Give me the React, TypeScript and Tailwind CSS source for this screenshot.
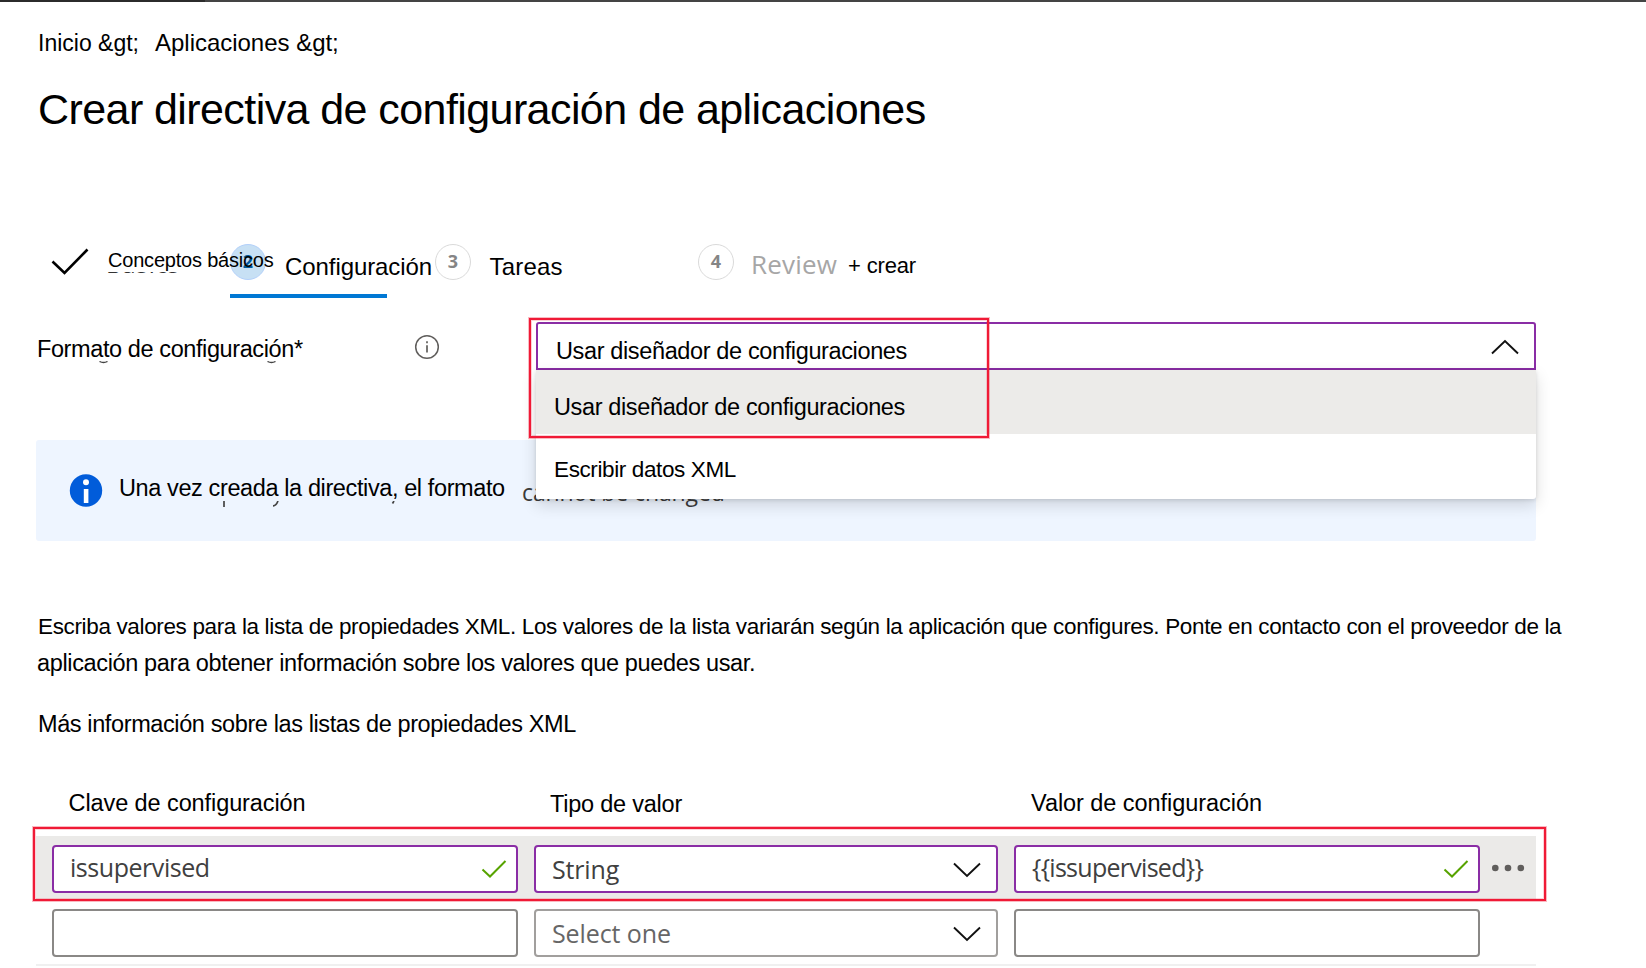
import React from "react";

const arial = "font-['Liberation_Sans',Arial,sans-serif] whitespace-nowrap text-black leading-[24px] block";
const segoe = "font-['Open_Sans','Noto_Sans',sans-serif] whitespace-nowrap block";

function ChevronDown() {
  return (
    <svg width="28" height="16" viewBox="0 0 28 16" fill="none" stroke="#111" strokeWidth="1.9">
      <path d="M1 1.5 14 14 27 1.5" />
    </svg>
  );
}

function GreenCheck() {
  return (
    <svg width="26" height="20" viewBox="0 0 26 20" fill="none" stroke="#57a300" strokeWidth="2">
      <path d="M1.5 10.5 9 17.5 24.5 2" />
    </svg>
  );
}

/* Thin highlight frame with a pale halo on both sides. */
function Highlight({ className }: { className: string }) {
  return (
    <div
      className={`pointer-events-none absolute border-2 border-[#f01a36] shadow-[0_0_0_1px_rgba(240,26,54,0.3),inset_0_0_0_1px_rgba(240,26,54,0.2)] ${className}`}
    />
  );
}

function Steps() {
  return (
    <div className="relative mt-[109px] flex h-[54px] items-start">
      <svg className="mt-1 ml-[50px]" width="40" height="28" viewBox="0 0 40 28" fill="none" stroke="#000" strokeWidth="2.6">
        <path d="M2.5 13.5 14.5 25 37.5 1.5" />
      </svg>
      <div className="mt-[28px] ml-[16px] h-[2px] w-[124px] overflow-hidden">
        <span className={`${segoe} -mt-[20px] text-[24px] leading-[24px] tracking-[0.8px] text-[#333]`}>Basics</span>
      </div>
      <div className="flex h-[54px] w-[157px] flex-col border-b-4 border-[#0078d4]">
        <div className={`${segoe} size-[36px] rounded-full border-[1.5px] border-[#b3d0fa] bg-[#c7e0f4] text-center text-[18px] leading-[33px] font-bold text-[#005a9e]`}>2</div>
      </div>
      <span className={`${arial} absolute top-[4px] left-[108px] text-[20px] tracking-[-0.2px]`}>Conceptos básicos</span>
      <span className={`${arial} mt-[11px] -ml-[102px] w-[148px] text-[24px] tracking-[-0.08px]`}>Configuración</span>
      <div className={`${segoe} ml-[2px] size-[36px] shrink-0 rounded-full border-[1.5px] border-[#dadada] text-center text-[18px] leading-[33px] font-bold text-[#858585]`}>3</div>
      <span className={`${arial} mt-[11px] ml-[18.5px] w-[208.5px] text-[24px] tracking-[0.2px]`}>Tareas</span>
      <div className={`${segoe} size-[36px] shrink-0 rounded-full border-[1.5px] border-[#dadada] text-center text-[18px] leading-[33px] font-bold text-[#858585]`}>4</div>
      <span className={`${segoe} mt-[6px] ml-[17px] w-[97px] text-[26px] leading-[28px] tracking-[0.2px] text-[#a6a6a6]`}>Review</span>
      <span className={`${arial} mt-[10px] text-[22px] tracking-[-0.15px]`}>+ crear</span>
    </div>
  );
}

function FormatRow() {
  return (
    <div className="relative z-10 flex h-[142px] items-start pl-[36px]">
      <div className="mt-[39px] w-[378px] pl-px">
        <span className={`${arial} text-[23.5px] tracking-[-0.4px]`}>Formato de configuración*</span>
        <svg className="ml-[60px] block" width="190" height="4" viewBox="0 0 190 4" fill="none" stroke="#444" strokeWidth="1.4">
          <path d="M2.500 .5Q6.500 2.600 10.500 .5M170.500 .5Q174.500 2.600 178.500 .5" />
        </svg>
      </div>
      <svg className="mt-[36px] w-[26px]" width="26" height="26" viewBox="0 0 26 26" fill="none" stroke="#605e5c" strokeWidth="1.5">
        <circle cx="13" cy="13" r="11.300" />
        <path d="M13 11.300V18.500M13 7.300V9.300" strokeWidth="1.700" />
      </svg>
      <div className="relative mt-[24px] ml-[96px] w-[1000px]">
        <div className="flex h-[48px] items-start justify-between rounded-t-[3px] border-2 border-[#8a2da5] bg-white pr-[15px] pl-[18px]">
          <span className={`${arial} mt-[15px] text-[23.5px] tracking-[-0.37px]`}>Usar diseñador de configuraciones</span>
          <svg className="mt-[15px]" width="28" height="16" viewBox="0 0 28 16" fill="none" stroke="#111" strokeWidth="1.9">
            <path d="M1 14.500 14 2 27 14.500" />
          </svg>
        </div>
        <div className="absolute top-[48px] left-0 w-full rounded-b-[3px] bg-white shadow-[0_6px_16px_rgba(0,0,0,0.14),0_1px_4px_rgba(0,0,0,0.12)]">
          <div className="h-[64px] bg-[#ecebe9] pt-[25px] pl-[18px]">
            <span className={`${arial} text-[23.5px] tracking-[-0.37px]`}>Usar diseñador de configuraciones</span>
          </div>
          <div className="h-[65px] pt-[24px] pl-[18px]">
            <span className={`${arial} text-[22.5px] tracking-[-0.38px]`}>Escribir datos XML</span>
          </div>
        </div>
        <Highlight className="-top-[4px] -left-[7px] h-[120px] w-[460px]" />
      </div>
    </div>
  );
}

function Banner() {
  return (
    <div className="ml-[36px] flex h-[101px] w-[1500px] items-start rounded-[3px] bg-[#eef5ff] pl-[33px]">
      <svg className="mt-[34px]" width="34" height="34" viewBox="0 0 34 34">
        <circle cx="17" cy="16.500" r="16.200" fill="#015cda" />
        <circle cx="17" cy="8.300" r="3" fill="#fff" />
        <rect x="14.800" y="15" width="4.600" height="14" fill="#fff" />
      </svg>
      <div className="mt-[36px] ml-[16px] w-[403px]">
        <span className={`${arial} text-[23.5px] tracking-[-0.39px]`}>Una vez creada la directiva, el formato</span>
        <svg className="mt-px block" width="300" height="7" viewBox="0 0 300 7" fill="none" stroke="#444" strokeWidth="1.700">
          <path d="M105 0V6M159 0Q157 5 154 4.800M275 0 273.500 2.500" />
        </svg>
      </div>
      <span className={`${segoe} mt-[39px] text-[23px] leading-[26px] tracking-[-0.1px] text-[#3b3b3b]`}>cannot be changed</span>
    </div>
  );
}

const box = "flex h-[48px] shrink-0 justify-between rounded-[4px] border-2 bg-white items-start";

function Table() {
  return (
    <div className="mt-[55px]">
      <div className="flex h-[45px] items-start pl-[68.5px]">
        <span className={`${arial} w-[481.5px] text-[23.5px] tracking-[-0.09px]`}>Clave de configuración</span>
        <span className={`${arial} mt-px w-[481px] text-[23.5px] tracking-[-0.23px]`}>Tipo de valor</span>
        <span className={`${arial} text-[23.5px] tracking-[-0.05px]`}>Valor de configuración</span>
      </div>
      <div className="relative h-[65px]">
        <div className="ml-[36px] flex h-[63px] w-[1500px] gap-4 bg-[#ebeae8] pt-[9px] pl-[16px]">
          <div className={`${box} w-[466px] border-[#8a2da5] pr-[9px] pl-[16px]`}>
            <span className={`${segoe} mt-[6px] text-[25px] leading-[28px] tracking-[-0.45px] text-[#404040]`}>issupervised</span>
            <span className="mt-[12px]"><GreenCheck /></span>
          </div>
          <div className={`${box} w-[464px] border-[#8a2da5] pr-[15px] pl-[16px]`}>
            <span className={`${segoe} mt-[8px] text-[25px] leading-[28px] tracking-[-0.17px] text-[#404040]`}>String</span>
            <span className="mt-[15px]"><ChevronDown /></span>
          </div>
          <div className={`${box} w-[466px] border-[#8a2da5] pr-[9px] pl-[16px]`}>
            <span className={`${segoe} mt-[6px] text-[25px] leading-[28px] tracking-[-0.72px] text-[#404040]`}>{"{{issupervised}}"}</span>
            <span className="mt-[12px]"><GreenCheck /></span>
          </div>
          <svg className="mt-[18px] -ml-[5px] shrink-0" width="34" height="10" viewBox="0 0 34 10" fill="#605e5c">
            <circle cx="4.300" cy="5" r="3.300" />
            <circle cx="17" cy="5" r="3.300" />
            <circle cx="29.800" cy="5" r="3.300" />
          </svg>
        </div>
        <Highlight className="-top-[9px] left-[33px] h-[74px] w-[1513px]" />
      </div>
      <div className="ml-[36px] flex h-[65px] w-[1500px] gap-4 border-b-2 border-[#f0f0f0] pt-[8px] pl-[16px]">
        <div className={`${box} w-[466px] border-[#8a8886]`} />
        <div className={`${box} w-[464px] border-[#a19f9d] pr-[15px] pl-[16px]`}>
          <span className={`${segoe} mt-[8px] text-[25px] leading-[28px] tracking-[-0.1px] text-[#666]`}>Select one</span>
          <span className="mt-[15px]"><ChevronDown /></span>
        </div>
        <div className={`${box} w-[466px] border-[#8a8886]`} />
      </div>
    </div>
  );
}

export default function App() {
  return (
    <div className="h-[968px] w-[1646px] overflow-hidden bg-white">
      <div className="flex h-[2px] bg-[#444]">
        <div className="w-[205px] bg-[#2b2b2b]" />
      </div>
      <nav className="flex pt-[29px] pl-[38px]">
        <span className={`${arial} w-[117px] text-[23px]`}>{"Inicio &gt;"}</span>
        <span className={`${arial} text-[24px] tracking-[-0.02px]`}>{"Aplicaciones &gt;"}</span>
      </nav>
      <h1 className="mt-[28px] h-[52px] pl-[38px] font-['Liberation_Sans',Arial,sans-serif] text-[43px] leading-[52px] tracking-[-0.58px] whitespace-nowrap text-black">
        Crear directiva de configuración de aplicaciones
      </h1>
      <Steps />
      <FormatRow />
      <Banner />
      <div className="mt-[67px] pl-[38px] font-['Liberation_Sans',Arial,sans-serif] whitespace-nowrap text-black">
        <p className="text-[22.5px] leading-[37px] tracking-[-0.355px]">
          Escriba valores para la lista de propiedades XML. Los valores de la lista variarán según la aplicación que configures. Ponte en contacto con el proveedor de la
        </p>
        <p className="-ml-px text-[23.5px] leading-[37px] tracking-[-0.36px]">
          aplicación para obtener información sobre los valores que puedes usar.
        </p>
        <p className="mt-[30px] text-[23.5px] leading-[24px] tracking-[-0.39px]">Más información sobre las listas de propiedades XML</p>
      </div>
      <Table />
    </div>
  );
}
